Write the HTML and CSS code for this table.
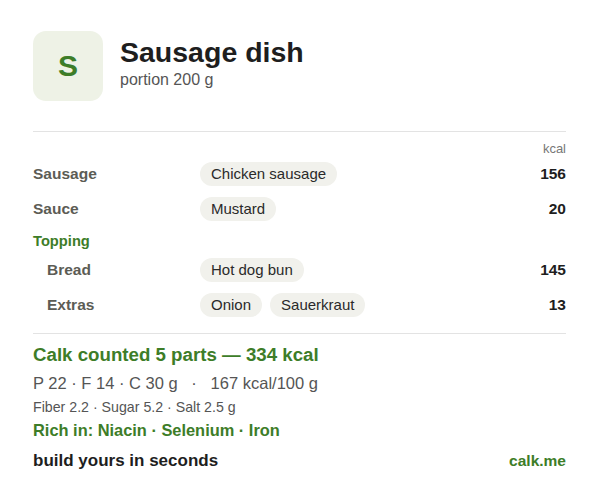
FILE: index.html
```html
<!DOCTYPE html>
<html>
<head>
<meta charset="utf-8">
<link rel="stylesheet" href="styles.css">
</head>
<body>
<div class="card">
  <header class="head">
    <div class="avatar">S</div>
    <div class="titles">
      <h1 class="title">Sausage dish</h1>
      <div class="sub">portion 200 g</div>
    </div>
  </header>
  <div class="rule"></div>
  <div class="unit">kcal</div>
  <div class="row">
    <div class="label">Sausage</div>
    <div class="chips"><span class="chip">Chicken sausage</span></div>
    <div class="val">156</div>
  </div>
  <div class="row">
    <div class="label">Sauce</div>
    <div class="chips"><span class="chip">Mustard</span></div>
    <div class="val">20</div>
  </div>
  <div class="group">Topping</div>
  <div class="row">
    <div class="label nested">Bread</div>
    <div class="chips"><span class="chip">Hot dog bun</span></div>
    <div class="val">145</div>
  </div>
  <div class="row">
    <div class="label nested">Extras</div>
    <div class="chips"><span class="chip">Onion</span><span class="chip">Sauerkraut</span></div>
    <div class="val">13</div>
  </div>
  <div class="rule rule2"></div>
  <div class="total">Calk counted 5 parts — 334 kcal</div>
  <div class="macros">P 22 · F 14 · C 30 g &nbsp; · &nbsp; 167 kcal/100 g</div>
  <div class="micro">Fiber 2.2 · Sugar 5.2 · Salt 2.5 g</div>
  <div class="rich">Rich in: Niacin · Selenium · Iron</div>
  <footer class="foot">
    <span class="cta">build yours in seconds</span>
    <span class="brand">calk.me</span>
  </footer>
</div>
</body>
</html>
```
FILE: styles.css
```css
* { box-sizing: border-box; }
html, body { margin: 0; padding: 0; background: #fff; }
body { font-family: "Liberation Sans", Arial, sans-serif; color: #222; }
.card { padding: 31px 34px 0 33px; width: 600px; }
.head { display: flex; align-items: flex-start; gap: 17px; }
.avatar {
  width: 70px; height: 70px; border-radius: 13px;
  background: #eef2e6; color: #3d7d28;
  font-weight: bold; font-size: 30px;
  display: flex; align-items: center; justify-content: center;
}
.titles { margin-top: 4px; }
.title { margin: 0; font-size: 28.5px; font-weight: bold; color: #1e1e1e; line-height: 34px; }
.sub { font-size: 16px; color: #555; line-height: 20px; margin-top: 1px; }
.rule { height: 1px; background: #e3e3e3; margin-top: 30px; }
.unit { text-align: right; font-size: 13px; color: #777; margin-top: 10px; line-height: 14px; }
.row { display: flex; align-items: center; height: 35px; }
.label { width: 167px; font-size: 15.5px; font-weight: bold; color: #5c5c55; }
.label.nested { padding-left: 14px; }
.chips { flex: 1; display: flex; gap: 8px; }
.chip {
  background: #f1f1ec; border-radius: 12px; padding: 0 11px;
  height: 24px; line-height: 24px; font-size: 15px; color: #2a2a2a;
}
.val { font-size: 15.5px; font-weight: bold; color: #1e1e1e; }
.group { font-size: 14.7px; font-weight: bold; color: #3d7d28; padding-top: 4px; line-height: 22px; height: 26px; }
.rule2 { margin-top: 11px; }
.total { font-size: 18.7px; font-weight: bold; color: #3d7d28; margin-top: 9px; line-height: 24px; }
.macros { font-size: 16.5px; color: #555; margin-top: 6px; line-height: 20px; }
.micro { font-size: 14.2px; color: #555; margin-top: 5px; line-height: 18px; }
.rich { font-size: 16.4px; font-weight: bold; color: #3d7d28; margin-top: 4px; line-height: 20px; }
.foot { display: flex; justify-content: space-between; align-items: baseline; margin-top: 10px; line-height: 22px; }
.cta { font-size: 17px; font-weight: bold; color: #1e1e1e; }
.brand { font-size: 15.5px; font-weight: bold; color: #3d7d28; }
```
